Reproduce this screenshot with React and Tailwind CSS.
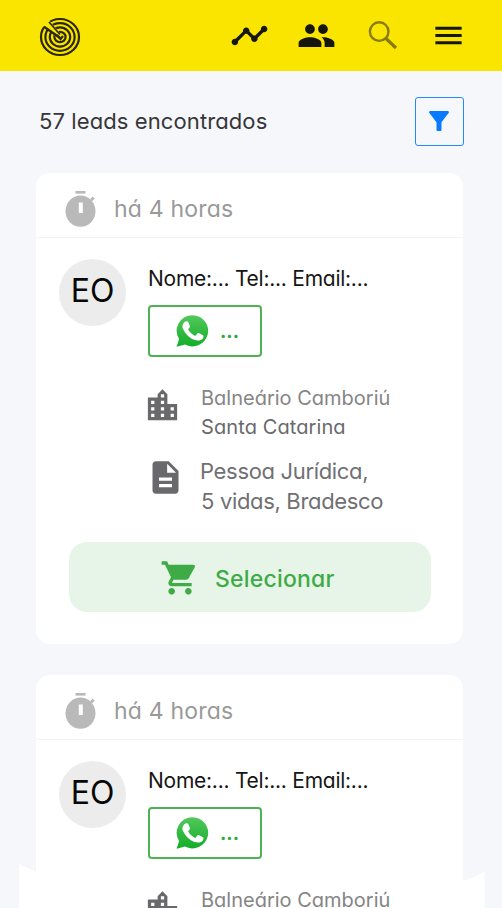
import {
  MdDescription,
  MdFilterAlt,
  MdLocationCity,
  MdMenu,
  MdPeople,
  MdShoppingCart,
  MdTimeline,
} from "react-icons/md";

const leads = [
  {
    id: 1,
    time: "há 4 horas",
    initials: "EO",
    contact: "Nome:... Tel:... Email:...",
    city: "Balneário Camboriú",
    state: "Santa Catarina",
    type: "Pessoa Jurídica,",
    plan: "5 vidas, Bradesco",
  },
  {
    id: 2,
    time: "há 4 horas",
    initials: "EO",
    contact: "Nome:... Tel:... Email:...",
    city: "Balneário Camboriú",
    state: "Santa Catarina",
    type: "Pessoa Jurídica,",
    plan: "5 vidas, Bradesco",
  },
];

function RadarLogo() {
  return (
    <svg viewBox="0 0 42 40" className="h-10 w-[42px]" fill="none">
      <g stroke="#2b2800" strokeWidth="2.2">
        <ellipse cx="21" cy="20" rx="19" ry="18" />
        <ellipse cx="21" cy="20" rx="14.6" ry="13.8" />
        <ellipse cx="21" cy="20" rx="10.2" ry="9.6" />
        <ellipse cx="21" cy="20" rx="5.6" ry="5.2" />
      </g>
      <path d="M1.500 7 L8.500 1.500 L20.500 15.500 L17 19.500 Z" fill="#fae500" />
      <path d="M5 9.800 L20.500 20.500" stroke="#2b2800" strokeWidth="2.400" />
      <path d="M10 5 L21 17.500" stroke="#2b2800" strokeWidth="1.600" />
      <path d="M18 18 L21.500 22 L24 19" stroke="#2b2800" strokeWidth="2.200" />
    </svg>
  );
}

function SearchIcon() {
  return (
    <svg viewBox="0 0 30 30" className="h-[30px] w-[30px]" fill="none" stroke="#867b0c">
      <circle cx="11.2" cy="10.6" r="9.3" strokeWidth="2.4" />
      <path d="M18 17.5 L28 27" strokeWidth="3.2" />
    </svg>
  );
}

function TimerIcon() {
  return (
    <svg viewBox="0 0 32 38" className="h-[38px] w-8" fill="#b9b9b9">
      <rect x="10.5" y="1" width="10" height="2.6" />
      <path d="M25 9.5 L27.5 6.5 L29.8 8.5 L27 11.5 Z" />
      <ellipse cx="15.5" cy="21.200" rx="15" ry="15.600" />
      <rect x="13.8" y="12.5" width="4" height="10.5" fill="#fff" />
    </svg>
  );
}

function WhatsAppIcon() {
  return (
    <svg viewBox="0 0 34 34" className="h-[34px] w-[34px]">
      <defs>
        <linearGradient id="whats" x1="0" y1="0" x2="0" y2="1">
          <stop offset="0" stopColor="#53c85c" />
          <stop offset="1" stopColor="#12ad28" />
        </linearGradient>
      </defs>
      <path
        d="M17.5 1.2 A15.8 15.6 0 1 1 10 30.6 L1.6 32.8 L4.1 25 A15.8 15.6 0 0 1 17.5 1.2 Z"
        fill="url(#whats)"
      />
      <path
        d="M10.4 7.6 C11.4 6.9 12.8 7 13.3 8.1 L14.9 12 C15.3 13.1 14 14.3 13.1 15.2 C14.8 18.4 17.1 20.5 20.3 21.9 L22.4 19.5 C23 18.8 23.7 19 24.3 19.3 L28 21.2 C28.9 21.7 28.6 23.3 27.8 24.4 C26.4 26.3 23.8 27 21.3 26.3 C14.9 24.6 10.3 20.2 7.8 14.4 C6.8 11.8 8.2 9 10.4 7.6 Z"
        fill="#fff"
      />
    </svg>
  );
}

function Header() {
  return (
    <header className="flex h-[71px] items-center bg-[#fae500] pl-[39px] text-[#16160c]">
      <div className="mt-[3px] flex">
        <RadarLogo />
      </div>
      <nav className="ml-[149px] flex items-center">
        <MdTimeline className="h-[39px] w-[39px]" />
        <MdPeople className="ml-7 h-[39px] w-[39px]" />
        <span className="ml-8 flex">
          <SearchIcon />
        </span>
        <MdMenu className="ml-[33px] h-[35px] w-[35px]" />
      </nav>
    </header>
  );
}

function LeadCard({ lead }) {
  return (
    <article className="h-[471px] rounded-[14px] bg-white">
      <div className="flex h-[65px] items-center border-b border-[#f4f4f5] pl-[29px]">
        <span className="mt-[7px] flex">
          <TimerIcon />
        </span>
        <span className="ml-[17px] mt-2 text-[23px] leading-none tracking-[0.2px] text-[#999]">
          {lead.time}
        </span>
      </div>

      <div className="flex pl-[23px] pt-[21px]">
        <div className="flex h-[67px] w-[67px] shrink-0 items-center justify-center rounded-full bg-[#ececec] pb-[3px] text-[32px] text-[#080808]">
          {lead.initials}
        </div>
        <div className="ml-[22px]">
          <p className="h-[46px] whitespace-nowrap pt-[6px] text-[21px] leading-[28px] tracking-[-0.25px] text-[#161616]">
            {lead.contact}
          </p>
          <button className="flex h-[52px] w-[114px] items-center rounded border-2 border-[#4eb253] pl-[25px]">
            <WhatsAppIcon />
            <span className="ml-[11px] mt-[2px] text-[19px] font-bold text-[#2fa843]">...</span>
          </button>

          <div className="mt-[27px] flex text-[#69696c]">
            <MdLocationCity className="-ml-[5px] mt-[2px] h-[39px] w-[39px] shrink-0" />
            <div className="ml-[19px] whitespace-nowrap text-[20px] leading-[29px]">
              <p className="text-[#858585]">{lead.city}</p>
              <p className="tracking-[0.1px]">{lead.state}</p>
            </div>
          </div>
          <div className="mt-[14px] flex text-[#69696c]">
            <MdDescription className="-ml-[2px] mt-[2px] h-[39px] w-[39px] shrink-0" />
            <div className="ml-[15px] whitespace-nowrap text-[22px] leading-[30px] tracking-[-0.33px] text-[#707073]">
              <p>{lead.type}</p>
              <p className="pl-px">{lead.plan}</p>
            </div>
          </div>
        </div>
      </div>

      <button className="ml-[33px] mt-[26px] flex h-[70px] w-[362px] items-center rounded-[18px] bg-[#e7f5e8] pl-[91px] text-[#3fab46]">
        <MdShoppingCart className="mt-px h-10 w-10" />
        <span className="ml-[15px] mt-1 text-[23px] font-medium leading-none tracking-[0.2px]">
          Selecionar
        </span>
      </button>
    </article>
  );
}

export default function App() {
  return (
    <div className="relative h-[908px] w-[502px] overflow-hidden bg-[#f6f7fa] font-['Inter',sans-serif] [font-feature-settings:'cv11']">
      <Header />
      <div className="flex h-[102px] items-center justify-between pb-[2px] pl-[39px] pr-[38px]">
        <h1 className="text-[22px] tracking-[0.1px] text-[#363638]">57 leads encontrados</h1>
        <button className="flex h-[49px] w-[49px] items-center justify-center rounded-[3px] border border-[#2389fb] text-[#077aff]">
          <MdFilterAlt className="mr-px h-[30px] w-[30px]" />
        </button>
      </div>
      <main className="ml-9 flex w-[427px] flex-col gap-[31px]">
        {leads.map((lead) => (
          <LeadCard key={lead.id} lead={lead} />
        ))}
      </main>
      {/* white flaps beside the lower card, kept clear of its content */}
      <svg viewBox="0 0 17 44" className="absolute bottom-0 left-[19px] h-11 w-[17px]" fill="#fff">
        <path d="M0 0 L17 8 V44 H0 Z" />
      </svg>
      <svg viewBox="0 0 22 38" className="absolute bottom-0 left-[463px] h-[38px] w-[22px]" fill="#fff">
        <path d="M0 11 Q11 8 21.500 1 V38 H0 Z" />
      </svg>
    </div>
  );
}
